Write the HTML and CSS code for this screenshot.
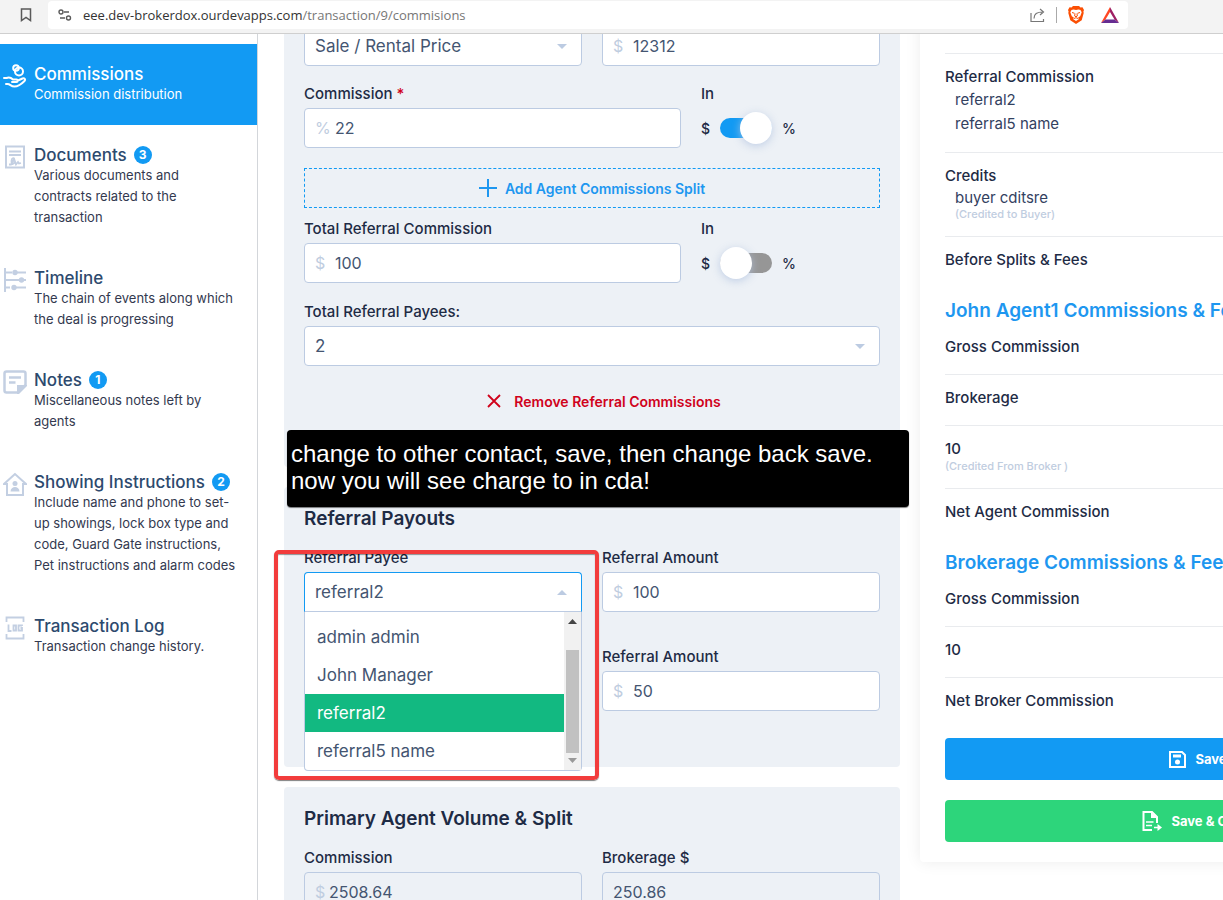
FILE: index.html
```html
<!DOCTYPE html>
<html lang="en">

<head>
    <meta charset="UTF-8">
    <meta name="viewport" content="width=device-width, initial-scale=1.0">
    <title>Commissions</title>
    <link rel="stylesheet" href="styles.css">
</head>

<body>
    <header class="browser-bar">
        <button class="icon-btn" type="button" aria-label="Bookmark">
            <svg width="12" height="14" viewBox="0 0 12 14" fill="none" stroke="#5a5a5a" stroke-width="1.5"><path d="M1.5 1h9v11.5L6 9.5l-4.500 3z"/></svg>
        </button>
        <div class="address">
            <svg width="14" height="14" viewBox="0 0 14 14" fill="none" stroke="#5a5a5a" stroke-width="1.4"><circle cx="3" cy="4" r="2"/><path d="M6 4h5M2 10h5"/><circle cx="10.500" cy="10" r="2"/></svg>
            <a href="/transaction/9/commisions">eee.dev-brokerdox.ourdevapps.com<span>/transaction/9/commisions</span></a>
            <button class="icon-btn" type="button" aria-label="Share">
                <svg width="15" height="15" viewBox="0 0 15 15" fill="none" stroke="#777" stroke-width="1.2"><path d="M1 5v8.500h12.500V11M4 10.500C4 6 7 4 12.500 4M10 1l3.500 3L10 7"/></svg>
            </button>
            <i class="divider"></i>
            <button class="icon-btn" type="button" aria-label="Brave Shields">
                <svg width="16" height="18" viewBox="0 0 16 18"><path fill="#fb4f04" d="M5 0h6l1.500 1.500L14.500 1.300 16 4l-.6 1.600.3 1.400-2 7.200L8 18l-5.700-3.800L.3 7l.3-1.400L0 4l1.500-2.700 2 .2z"/><path fill="#fff" d="M3.500 4l2-.5L8 4l2.500-.5 2 .5 1.200 2.300-1.500 4-2 1.200.5 1.700L8 15l-2.700-1.800.5-1.700-2-1.200-1.500-4z"/><path fill="none" stroke="#fb4f04" stroke-width="1" d="M4 6.500l2.500.8M12 6.500l-2.500.8M7 7.500L6.700 10 8 10.800 9.300 10 9 7.500M6 12.500l2-.8 2 .8"/></svg>
            </button>
            <button class="icon-btn rewards" type="button" aria-label="Rewards">
                <svg width="18" height="16" viewBox="0 0 18 16"><path fill="#ff4724" d="M9 0v5L4.500 12.500 0 16z"/><path fill="#9e1f63" d="M9 0l9 16-4.500-3.500L9 5z"/><path fill="#662d91" d="M0 16l4.500-3.500h9L18 16z"/></svg>
            </button>
        </div>
    </header>

    <div class="page">
        <nav class="sidebar">
            <a class="step active" href="#commissions">
                <svg class="step-icon" viewBox="0 0 24 24" fill="none" stroke="currentColor" stroke-width="2" stroke-linecap="round" stroke-linejoin="round"><circle cx="13" cy="4" r="2.800"/><circle cx="16" cy="7.500" r="4"/><path d="M1 14h2.500c3-1.500 5 0 6.500 1.500h3.500c1.500 0 1.500 2.500 0 2.500H9M15 16.500l4.500-2c2-.7 3.500 1 2 2.500-3 3-6 5.500-10 5.500-4 0-4-2.500-7-2.500H3"/></svg>
                <span class="step-text">
                    <span class="step-title">Commissions</span>
                    <span class="step-desc">Commission distribution</span>
                </span>
            </a>
            <a class="step" href="#documents">
                <svg class="step-icon" viewBox="0 0 24 24" fill="none" stroke="currentColor" stroke-width="2"><path d="M3 1.500h18v21H3z"/><path d="M6 6.500h12M6 10h12" stroke-width="1.800"/><path d="M6 19.500h2l3-5c1-2-2.500-2-2.500 1.500 0 4 2 4 3.500.5l1 3 2-2.500 1 1.500 2-.5" stroke-width="1.800"/></svg>
                <span class="step-text">
                    <span class="step-title">Documents <b class="badge">3</b></span>
                    <span class="step-desc">Various documents and contracts related to the transaction</span>
                </span>
            </a>
            <a class="step" href="#timeline">
                <svg class="step-icon" viewBox="0 0 24 24" fill="none" stroke="currentColor" stroke-width="2"><path d="M2 0v24M2 4.500h7M14 4.500h9M2 12h15M20 12h3M2 19.500h5M12 19.500h11"/><g fill="currentColor" stroke="none"><circle cx="12" cy="4.500" r="2.700"/><circle cx="18.500" cy="12" r="2.700"/><circle cx="11" cy="19.500" r="2.700"/></g></svg>
                <span class="step-text">
                    <span class="step-title">Timeline</span>
                    <span class="step-desc">The chain of events along which the deal is progressing</span>
                </span>
            </a>
            <a class="step" href="#notes">
                <svg class="step-icon" viewBox="0 0 24 24" fill="none" stroke="currentColor" stroke-width="2.500"><path d="M3.500 1.500h17q2 0 2 2V15l-7.500 7.500H3.500q-2 0-2-2v-17q0-2 2-2z"/><path fill="currentColor" stroke="none" d="M14 24v-9h10v1l-8 8z"/><path d="M6 7.500h12M6 12.500h6.500"/></svg>
                <span class="step-text">
                    <span class="step-title">Notes <b class="badge">1</b></span>
                    <span class="step-desc">Miscellaneous notes left by agents</span>
                </span>
            </a>
            <a class="step" href="#showing">
                <svg class="step-icon" viewBox="0 0 24 24" fill="none" stroke="currentColor" stroke-width="2"><path d="M12 2L1 12h3v11h16V12h3z"/><circle cx="12" cy="11.500" r="2.500" fill="currentColor" stroke="none"/><path d="M7.500 19.500c0-6 9-6 9 0z" fill="currentColor" stroke="none"/></svg>
                <span class="step-text">
                    <span class="step-title">Showing Instructions <b class="badge">2</b></span>
                    <span class="step-desc">Include name and phone to set-up showings, lock box type and code, Guard Gate instructions, Pet instructions and alarm codes</span>
                </span>
            </a>
            <a class="step" href="#log">
                <svg class="step-icon" viewBox="0 0 24 24" fill="none" stroke="currentColor" stroke-width="1.800"><path d="M3.500 6V1.500h17V6M3.500 18v4.500h17V18M5.500 8.500v6.500h3M10.500 9.500h2.500v5h-2.500zM19 10V9.500h-3.500v5H19v-2.500h-1.500"/></svg>
                <span class="step-text">
                    <span class="step-title">Transaction Log</span>
                    <span class="step-desc">Transaction change history.</span>
                </span>
            </a>
        </nav>

        <main class="content">
            <section class="panel panel-commission">
                <div class="row halves">
                    <div class="select-box">
                        <select aria-label="Price type"><option>Sale / Rental Price</option></select>
                    </div>
                    <div class="input-box">
                        <span class="unit">$</span>
                        <input type="text" aria-label="Price" value="12312">
                    </div>
                </div>
                <div class="row with-switch first">
                    <div class="field">
                        <label for="commission">Commission <em>*</em></label>
                        <div class="input-box">
                            <span class="unit">%</span>
                            <input type="text" id="commission" value="22">
                        </div>
                    </div>
                    <div class="field">
                        <label for="commission-in">In</label>
                        <div class="switch-box">$ <input class="switch" type="checkbox" id="commission-in" checked> %</div>
                    </div>
                </div>
                <button class="add-split" type="button">
                    <svg width="18" height="18" viewBox="0 0 18 18" stroke="currentColor" stroke-width="2"><path d="M9 0v18M0 9h18"/></svg>
                    Add Agent Commissions Split
                </button>
                <div class="row with-switch referral">
                    <div class="field">
                        <label for="referral-total">Total Referral Commission</label>
                        <div class="input-box">
                            <span class="unit">$</span>
                            <input type="text" id="referral-total" value="100">
                        </div>
                    </div>
                    <div class="field">
                        <label for="referral-in">In</label>
                        <div class="switch-box">$ <input class="switch" type="checkbox" id="referral-in"> %</div>
                    </div>
                </div>
                <div class="field payees">
                    <label for="payees">Total Referral Payees:</label>
                    <div class="select-box">
                        <select id="payees"><option>2</option></select>
                    </div>
                </div>
                <button class="remove" type="button">
                    <svg width="14" height="14" viewBox="0 0 14 14" stroke="currentColor" stroke-width="1.800"><path d="M1 1l12 12M13 1L1 13"/></svg>
                    Remove Referral Commissions
                </button>
            </section>

            <section class="panel panel-payouts">
                <h2>Referral Payouts</h2>
                <div class="row halves">
                    <div class="field">
                        <label for="payee">Referral Payee</label>
                        <div class="select-box open">
                            <select id="payee"><option>referral2</option></select>
                            <div class="dropdown">
                                <ul class="options">
                                    <li>admin admin</li>
                                    <li>John Manager</li>
                                    <li class="selected">referral2</li>
                                    <li>referral5 name</li>
                                </ul>
                                <div class="scrollbar">
                                    <svg width="9" height="5" viewBox="0 0 9 5" fill="#444"><path d="M0 5l4.500-5L9 5z"/></svg>
                                    <i class="thumb"></i>
                                    <svg width="9" height="5" viewBox="0 0 9 5" fill="#999"><path d="M0 0h9L4.500 5z"/></svg>
                                </div>
                            </div>
                        </div>
                    </div>
                    <div class="field">
                        <label for="amount1">Referral Amount</label>
                        <div class="input-box">
                            <span class="unit">$</span>
                            <input type="text" id="amount1" value="100">
                        </div>
                    </div>
                </div>
                <div class="row halves second">
                    <div class="field amount">
                        <label for="amount2">Referral Amount</label>
                        <div class="input-box">
                            <span class="unit">$</span>
                            <input type="text" id="amount2" value="50">
                        </div>
                    </div>
                </div>
            </section>

            <section class="panel">
                <h2>Primary Agent Volume &amp; Split</h2>
                <div class="row halves">
                    <div class="field">
                        <label for="volume">Commission</label>
                        <div class="input-box readonly">
                            <span class="unit">$</span>
                            <input type="text" id="volume" value="2508.64" readonly>
                        </div>
                    </div>
                    <div class="field">
                        <label for="brokerage">Brokerage $</label>
                        <div class="input-box readonly">
                            <input type="text" id="brokerage" value="250.86" readonly>
                        </div>
                    </div>
                </div>
            </section>
        </main>

        <aside class="summary">
            <div class="line top">
                <p>Referral Commission</p>
                <ul class="people">
                    <li>referral2</li>
                    <li>referral5 name</li>
                </ul>
            </div>
            <div class="line">
                <p>Credits</p>
                <div class="credit">buyer cditsre</div>
                <small class="indent">(Credited to Buyer)</small>
            </div>
            <div class="line last"><p>Before Splits &amp; Fees</p></div>
            <h3>John Agent1 Commissions &amp; Fees</h3>
            <div class="line"><p>Gross Commission</p></div>
            <div class="line"><p>Brokerage</p></div>
            <div class="line">
                <p>10</p>
                <small>(Credited From Broker )</small>
            </div>
            <div class="line last"><p>Net Agent Commission</p></div>
            <h3>Brokerage Commissions &amp; Fees</h3>
            <div class="line"><p>Gross Commission</p></div>
            <div class="line"><p>10</p></div>
            <div class="line last"><p>Net Broker Commission</p></div>
            <div class="actions">
                <button class="save" type="button">
                    <svg width="17" height="17" viewBox="0 0 17 17" fill="none" stroke="currentColor" stroke-width="2"><path d="M1 1h12l3 3v12H1z"/><path d="M4 5h8" stroke-width="3"/><circle cx="8.500" cy="11" r="2.500" fill="currentColor" stroke="none"/></svg>
                    Save
                </button>
                <button class="save-close" type="button">
                    <svg width="20" height="20" viewBox="0 0 20 20" fill="none" stroke="currentColor" stroke-width="2"><path d="M10 19H1.500V1H10l5 5v6"/><path fill="currentColor" stroke="none" d="M9 1l6.500 6H9z"/><path d="M4 11h7.500M4 14.500h6M12 16.500h5" stroke-width="1.700"/><path fill="currentColor" stroke="none" d="M15.500 13l4.500 3.500-4.500 3.500z"/></svg>
                    Save &amp; Close
                </button>
            </div>
        </aside>

        <!-- review notes drawn over the page -->
        <div class="mark"></div>
        <p class="comment">change to other contact, save, then change back save.<br>now you will see charge to in cda!</p>
    </div>
</body>

</html>
```
FILE: styles.css
```css
* {
    box-sizing: border-box;
}

body {
    margin: 0;
    height: 100vh;
    overflow: hidden;
    font-family: Inter, sans-serif;
    font-size: 15px;
    color: #1e2b45;
    background-color: #fff;
}

h2,
h3,
p,
ul {
    margin: 0;
    padding: 0;
    list-style: none;
}

button,
input,
select {
    font-family: inherit;
}

button {
    cursor: pointer;
}

svg {
    display: block;
    flex: none;
}

/* browser bar */
.browser-bar {
    position: fixed;
    top: 0;
    left: 0;
    right: 0;
    z-index: 10;
    display: flex;
    align-items: center;
    gap: 16px;
    height: 34px;
    padding: 0 95px 3px 20px;
    background-color: #f3f3f3;
    border-bottom: 1px solid #cfcfcf;
}

.icon-btn {
    padding: 0;
    border: none;
    background: none;
}

.address {
    flex: 1;
    display: flex;
    align-items: center;
    gap: 11px;
    height: 28px;
    padding: 0 9px 0 10px;
    background-color: #fff;
    border-radius: 4px;
}

.address a {
    flex: 1;
    font-family: "Open Sans", sans-serif;
    font-size: 13px;
    color: #333;
    text-decoration: none;
}

.address span {
    color: #777;
}

.rewards {
    margin-left: 6px;
}

.divider {
    width: 1px;
    height: 16px;
    background-color: #aaa;
}

.page {
    position: relative;
    display: grid;
    grid-template-columns: 258px minmax(642px, 1fr) 576px;
    align-items: start;
}

/* sidebar */
.sidebar {
    min-height: 100vh;
    padding-top: 44px;
    border-right: 1px solid #d3d6da;
}

.step {
    display: flex;
    gap: 7px;
    padding: 20px 19px 20px 3px;
    color: #c3cfe2;
    text-decoration: none;
}

.step-icon {
    width: 24px;
    height: 24px;
}

.step-title {
    display: flex;
    align-items: center;
    gap: 7px;
    line-height: 20px;
    font-size: 17px;
    font-weight: 500;
    color: #2d4a6e;
}

.step-desc {
    display: block;
    line-height: 21px;
    font-size: 13px;
    color: #33394f;
}

.badge {
    width: 18px;
    height: 18px;
    border-radius: 50%;
    background-color: #129af3;
    color: #fff;
    font-size: 12px;
    line-height: 18px;
    text-align: center;
}

.active {
    background-color: #129af3;
    color: #fff;
}

.active .step-title,
.active .step-desc {
    color: #fff;
}

/* form */
.content {
    display: flex;
    flex-direction: column;
    gap: 20px;
    padding-left: 26px;
}

.panel {
    padding: 20px 20px 56px;
    background-color: #edf1f6;
    border-radius: 4px;
}

.panel-commission {
    padding: 26px 20px 46px;
}

h2 {
    margin-bottom: 17px;
    line-height: 24px;
    font-size: 19px;
    font-weight: 600;
}

.row {
    display: grid;
    gap: 20px;
}

.halves {
    grid-template-columns: minmax(0, 1fr) minmax(0, 1fr);
}

.with-switch {
    grid-template-columns: 1fr 179px;
}

.first {
    margin-top: 18px;
}

.referral {
    margin-top: 11px;
}

.payees {
    margin-top: 19px;
}

.second {
    margin-top: 35px;
}

.amount {
    grid-column: 2;
}

label {
    display: block;
    margin-bottom: 4px;
    line-height: 20px;
    font-size: 15px;
    font-weight: 500;
}

label em {
    color: #d0021b;
    font-style: normal;
}

.input-box,
.select-box {
    position: relative;
    display: flex;
    align-items: center;
    height: 40px;
    padding: 0 10px;
    border: 1px solid #bccbe2;
    border-radius: 4px;
    background-color: #fff;
}

.input-box input,
.select-box select {
    flex: 1;
    min-width: 0;
    height: 38px;
    padding: 0;
    border: none;
    outline: none;
    background: none;
    appearance: none;
    font-size: 16px;
    color: #445571;
}

.select-box select {
    font-size: 17px;
}

.unit {
    width: 20px;
    font-size: 16px;
    color: #bfcde0;
}

.readonly {
    background-color: #edf1f6;
}

.readonly .unit {
    width: 14px;
}

.select-box::after {
    content: "";
    margin-right: 4px;
    border: 5px solid transparent;
    border-top-color: #bccbe2;
    border-bottom: none;
}

.open {
    border-color: #129af3;
    border-bottom-color: #bccbe2;
    border-radius: 4px 4px 0 0;
}

.open::after {
    border: 5px solid transparent;
    border-bottom-color: #bccbe2;
    border-top: none;
}

.dropdown {
    position: absolute;
    top: 39px;
    left: -1px;
    right: -1px;
    z-index: 2;
    display: flex;
    border: 1px solid #bccbe2;
    border-top: none;
    border-radius: 0 0 4px 4px;
    background-color: #fff;
}

.options {
    flex: 1;
    padding-top: 6px;
}

.options li {
    padding-left: 12px;
    line-height: 38px;
    font-size: 17px;
    color: #445571;
}

.options .selected {
    background-color: #12b981;
    color: #fff;
}

.scrollbar {
    display: flex;
    flex-direction: column;
    align-items: center;
    justify-content: space-between;
    width: 17px;
    padding: 7px 2px;
    background-color: #f1f1f1;
}

.thumb {
    width: 13px;
    height: 103px;
    margin-top: 20px;
    background-color: #c1c1c1;
}

.switch-box {
    display: flex;
    align-items: center;
    gap: 10px;
    height: 40px;
    font-size: 14px;
    font-weight: 500;
}

.switch {
    appearance: none;
    display: flex;
    align-items: center;
    width: 52px;
    height: 20px;
    margin: 0;
    border-radius: 10px;
    background-color: #969696;
}

.switch::before {
    content: "";
    width: 32px;
    height: 32px;
    flex: none;
    border-radius: 50%;
    background-color: #fff;
    box-shadow: 0 2px 8px rgba(180, 197, 225, 0.8);
}

.switch:checked {
    justify-content: flex-end;
    background-color: #129af3;
}

.add-split,
.remove {
    display: flex;
    align-items: center;
    justify-content: center;
    width: 100%;
    height: 40px;
    font-size: 14px;
    font-weight: 600;
    background: none;
}

.add-split {
    gap: 8px;
    margin-top: 20px;
    border: 1px dashed #129af3;
    color: #1e97f0;
}

.remove {
    gap: 13px;
    margin-top: 15px;
    padding-left: 30px;
    border: none;
    color: #d0021b;
}

/* summary */
.summary {
    margin-left: 20px;
    padding: 53px 25px 20px;
    background-color: #fff;
    border-radius: 4px;
    box-shadow: 0 0 16px rgba(0, 0, 0, 0.08);
}

.line {
    padding: 12px 0 16px;
    border-bottom: 1px solid #e9ebee;
    font-weight: 500;
    line-height: 22px;
}

.top {
    border-top: 1px solid #e9ebee;
}

.last {
    border-bottom: none;
}

.people,
.credit {
    padding-left: 10px;
    line-height: 24px;
    font-weight: 400;
    color: #33415f;
}

.credit {
    line-height: 21px;
}

small {
    display: block;
    line-height: 12px;
    font-size: 11px;
    color: #bfcde0;
}

.indent {
    padding-left: 10px;
}

h3 {
    margin-top: 11px;
    line-height: 26px;
    font-size: 19px;
    font-weight: 600;
    color: #1e97f0;
    white-space: nowrap;
}

.actions {
    display: flex;
    flex-direction: column;
    gap: 20px;
    margin-top: 10px;
}

.actions button {
    display: flex;
    align-items: center;
    justify-content: center;
    gap: 9px;
    height: 42px;
    border: none;
    border-radius: 4px;
    color: #fff;
    font-size: 13px;
    font-weight: 700;
}

.save {
    background-color: #129af3;
}

.save-close {
    background-color: #2dd57b;
}

/* review notes */
.mark {
    position: absolute;
    top: 550px;
    left: 274px;
    z-index: 3;
    width: 325px;
    height: 230px;
    border: 4px solid #f23c3c;
    border-radius: 5px;
    box-shadow: 0 1px 1px rgba(0, 0, 0, 0.5), inset 0 1px 1px rgba(0, 0, 0, 0.4);
}

.comment {
    position: absolute;
    top: 430px;
    left: 287px;
    z-index: 3;
    width: 622px;
    padding: 10px 4px 13px;
    border-radius: 4px;
    background-color: #000;
    color: #fff;
    font-family: "Liberation Sans", Arial, sans-serif;
    font-size: 24px;
    line-height: 27px;
    box-shadow: 0 1px 1px rgba(0, 0, 0, 0.5);
}
```
